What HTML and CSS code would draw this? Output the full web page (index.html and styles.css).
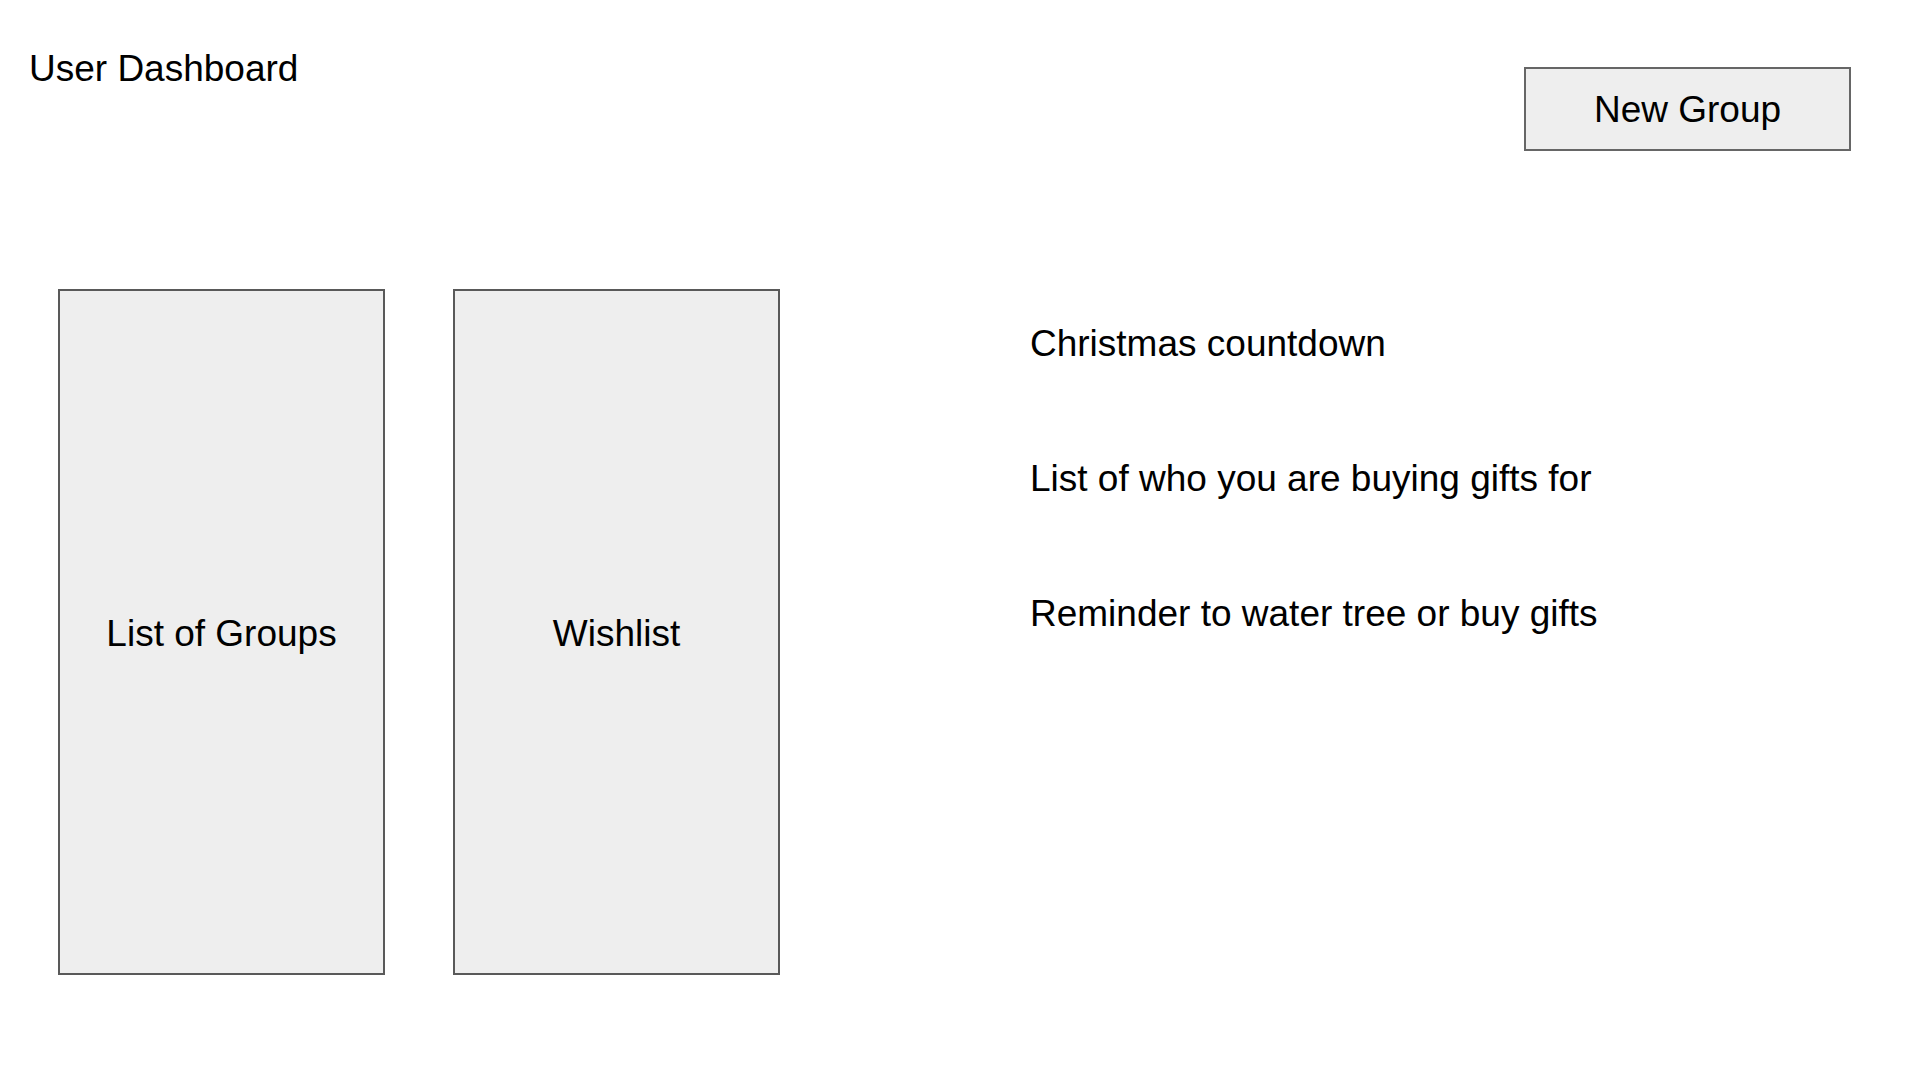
FILE: index.html
```html
<!DOCTYPE html>
<html>
<head>
<meta charset="utf-8">
<link rel="stylesheet" href="styles.css">
</head>
<body>
<div class="page">
  <header class="top">
    <h1 class="title">User Dashboard</h1>
    <button class="new-group">New Group</button>
  </header>
  <main class="main">
    <section class="panel">List of Groups</section>
    <section class="panel panel-second">Wishlist</section>
    <div class="notes">
      <p class="note">Christmas countdown</p>
      <p class="note">List of who you are buying gifts for</p>
      <p class="note">Reminder to water tree or buy gifts</p>
    </div>
  </main>
</div>
</body>
</html>
```
FILE: styles.css
```css
html, body {
  margin: 0;
  padding: 0;
  background: #ffffff;
}
body {
  font-family: "Liberation Sans", Arial, sans-serif;
  color: #000000;
  width: 1909px;
  height: 1079px;
  overflow: hidden;
}
.page {
  padding: 0 58px 0 29px;
}
.top {
  display: flex;
  justify-content: space-between;
  align-items: flex-start;
}
.title {
  margin: 49px 0 0 0;
  font-size: 37px;
  font-weight: normal;
  line-height: 40px;
}
.new-group {
  margin-top: 67px;
  width: 327px;
  height: 84px;
  background: #eeeeee;
  border: 2px solid #666666;
  font-family: "Liberation Sans", Arial, sans-serif;
  font-size: 37px;
  color: #000000;
  padding: 2px 0 0 0;
  border-radius: 0;
}
.main {
  display: flex;
  align-items: flex-start;
  margin-top: 138px;
  padding-left: 29px;
}
.panel {
  box-sizing: border-box;
  width: 327px;
  height: 686px;
  padding-top: 3px;
  background: #eeeeee;
  border: 2px solid #595959;
  display: flex;
  align-items: center;
  justify-content: center;
  font-size: 37px;
  line-height: 40px;
}
.panel-second {
  margin-left: 68px;
}
.notes {
  margin-left: 250px;
  padding-top: 35px;
  display: flex;
  flex-direction: column;
  gap: 95px;
}
.note {
  margin: 0;
  font-size: 37px;
  line-height: 40px;
}
```
